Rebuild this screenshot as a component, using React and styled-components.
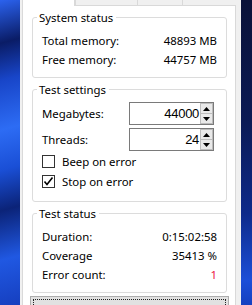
import React from 'react';
import styled, { createGlobalStyle } from 'styled-components';

const GlobalStyle = createGlobalStyle`
  html, body {
    margin: 0;
    height: 100%;
    overflow: hidden;
  }
  body {
    font-family: "Noto Sans", "Liberation Sans", sans-serif;
    font-size: 11.4px;
    color: #000;
  }
  #root {
    height: 100%;
  }
`;

const Desktop = styled.div`
  display: flex;
  height: 100%;
`;

const Wallpaper = styled.div`
  flex: ${(p) => (p.$left ? '0 0 20px' : '1')};
  background: ${(p) =>
    p.$left
      ? 'linear-gradient(165deg, #2b62ee 0%, #0a1c66 14%, #1845c8 26%, #2d6cf4 42%, #1a4fd6 55%, #0b2378 68%, #2058e2 84%, #163fbf 100%)'
      : 'linear-gradient(180deg, #0a1238 0%, #0b1a55 40%, #0e2a8a 70%, #1c4fd8 92%, #1540c0 100%)'};
`;

const Window = styled.div`
  flex: 0 0 221px;
  box-sizing: border-box;
  padding: 0 5px 0 2px;
  background: #f0f0f0;
  display: flex;
  flex-direction: column;
`;

const TabStrip = styled.div`
  display: flex;
  align-items: flex-end;
  height: 6px;
  flex: none;
  overflow: hidden;
`;

const Tab = styled.div`
  box-sizing: border-box;
  flex: ${(p) => (p.$width ? `0 0 ${p.$width}px` : '1')};
  height: ${(p) => (p.$active ? 26 : 20)}px;
  display: flex;
  align-items: flex-end;
  justify-content: flex-end;
  padding: 0 4px 6px 0;
  line-height: 15px;
  background: ${(p) => (p.$active ? '#fff' : '#f0f0f0')};
  border-left: ${(p) => (p.$edge ? 'none' : '1px solid #d9d9d9')};
  border-right: ${(p) => (p.$closed ? '1px solid #d9d9d9' : 'none')};
  border-bottom: ${(p) => (p.$active ? 'none' : '1px solid #d9d9d9')};
`;

const Page = styled.div`
  flex: 1;
  display: flex;
  flex-direction: column;
  padding: 4px 8px 0 9px;
  background: #fff;
  border: 1px solid #d9d9d9;
  border-top: none;
`;

const Group = styled.fieldset`
  margin: ${(p) => (p.$first ? 0 : '4px 0 0')};
  padding: 0;
  min-width: 0;
  border: 1px solid #dcdcdc;
  border-radius: 3px;
`;

const Legend = styled.legend`
  margin-left: 4px;
  padding: 0 3px 0 2px;
  line-height: 15px;
`;

const GroupBody = styled.div`
  display: flex;
  flex-direction: column;
  padding: ${(p) => p.$pad};
`;

const InfoRow = styled.div`
  display: flex;
  justify-content: space-between;
  align-items: center;
  height: 19px;
  line-height: 19px;
`;

const Value = styled.span`
  color: ${(p) => (p.$alert ? '#ec1242' : '#000')};
`;

const FieldRow = styled.div`
  display: flex;
  justify-content: space-between;
  align-items: center;
  height: 23px;
  margin-top: ${(p) => (p.$gap ? 3 : 0)}px;
`;

const Spin = styled.div`
  box-sizing: border-box;
  display: flex;
  width: 85px;
  height: 23px;
  margin-right: 3px;
  border: 1px solid #7a7a7a;
  background: #fff;
`;

const SpinValue = styled.div`
  flex: 1;
  text-align: right;
  padding-right: 1px;
  font-family: "Liberation Sans", Arial, sans-serif;
  font-size: 13px;
  letter-spacing: -0.3px;
  line-height: 21px;
`;

const SpinButtons = styled.div`
  display: flex;
  flex-direction: column;
  width: 13px;
`;

const SpinButton = styled.div`
  flex: 1;
  display: flex;
  align-items: center;
  justify-content: center;
  box-sizing: border-box;
  background: #e9e9e9;
  border: 1px solid #bcbcbc;
  border-top-width: ${(p) => (p.$down ? 0 : 1)}px;
`;

const CheckRow = styled.label`
  display: flex;
  align-items: center;
  height: 20px;
  gap: 7px;
`;

const CheckBox = styled.span`
  box-sizing: border-box;
  width: 13px;
  height: 13px;
  border: 1px solid #333;
  background: #fff;
  display: flex;
  align-items: center;
  justify-content: center;
`;

const ActionButton = styled.div`
  margin: 3px -2px 0;
  height: 24px;
  flex: none;
  background: #e1e1e1;
  border: 1px solid #adadad;
  outline: 1px dotted #222;
  outline-offset: -4px;
`;

function Arrow({ down }) {
  return (
    <svg width="7" height="4" viewBox="0 0 7 4">
      <polygon points={down ? '0,0 7,0 3.5,4' : '0,4 7,4 3.5,0'} fill="#000" />
    </svg>
  );
}

function NumberField({ value }) {
  return (
    <Spin>
      <SpinValue>{value}</SpinValue>
      <SpinButtons>
        <SpinButton>
          <Arrow />
        </SpinButton>
        <SpinButton $down>
          <Arrow down />
        </SpinButton>
      </SpinButtons>
    </Spin>
  );
}

function Check({ checked, children }) {
  return (
    <CheckRow>
      <CheckBox>
        {checked && (
          <svg width="11" height="11" viewBox="0 0 11 11">
            <polyline points="1.5,5.5 4,8.5 9.5,1.5" fill="none" stroke="#000" strokeWidth="1.6" />
          </svg>
        )}
      </CheckBox>
      {children}
    </CheckRow>
  );
}

export default function App() {
  return (
    <>
      <GlobalStyle />
      <Desktop>
        <Wallpaper $left />
        <Window>
          <TabStrip>
            <Tab $active $width={53} $closed>g</Tab>
            <Tab $width={62} />
            <Tab $width={46} $closed />
            <Tab $edge />
          </TabStrip>
          <Page>
            <Group $first>
              <Legend>System status</Legend>
              <GroupBody $pad="6px 9px 8px">
                <InfoRow>
                  <span>Total memory:</span>
                  <Value>48893 MB</Value>
                </InfoRow>
                <InfoRow>
                  <span>Free memory:</span>
                  <Value>44757 MB</Value>
                </InfoRow>
              </GroupBody>
            </Group>
            <Group>
              <Legend>Test settings</Legend>
              <GroupBody $pad="5px 9px 10px">
                <FieldRow>
                  <span>Megabytes:</span>
                  <NumberField value="44000" />
                </FieldRow>
                <FieldRow $gap>
                  <span>Threads:</span>
                  <NumberField value="24" />
                </FieldRow>
                <Check>Beep on error</Check>
                <Check checked>Stop on error</Check>
              </GroupBody>
            </Group>
            <Group>
              <Legend>Test status</Legend>
              <GroupBody $pad="6px 9px 8px">
                <InfoRow>
                  <span>Duration:</span>
                  <Value>0:15:02:58</Value>
                </InfoRow>
                <InfoRow>
                  <span>Coverage</span>
                  <Value>35413 %</Value>
                </InfoRow>
                <InfoRow>
                  <span>Error count:</span>
                  <Value $alert>1</Value>
                </InfoRow>
              </GroupBody>
            </Group>
            <ActionButton />
          </Page>
        </Window>
        <Wallpaper />
      </Desktop>
    </>
  );
}
